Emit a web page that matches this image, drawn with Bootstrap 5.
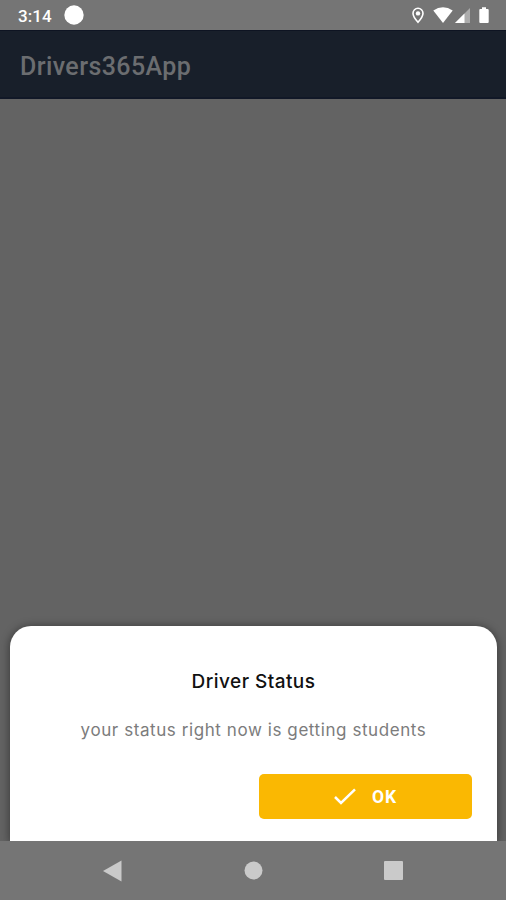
<!DOCTYPE html>
<html lang="en">
<head>
<meta charset="utf-8">
<meta name="viewport" content="width=device-width, initial-scale=1">
<title>Drivers365App</title>
<link href="https://cdn.jsdelivr.net/npm/bootstrap@5.3.0/dist/css/bootstrap.min.css" rel="stylesheet">
<style>
  body { font-family: Roboto, sans-serif; background: #636363; overflow: hidden; }
  .status-bar { height: 30px; background: #757575; padding: 0 16px 0 17px; }
  .clock { font-size: 17px; font-weight: 500; line-height: 30px; width: 47px; letter-spacing: .1px; padding: 1px 0 0 1px; }
  .app-bar { height: 69px; background: #181f2a; border-top: 1px solid #0e1422; border-bottom: 2px solid #111827; padding: 5px 20px 0; }
  .app-title { font-size: 25px; font-weight: 500; color: #6b6d70; letter-spacing: .4px; line-height: 36px; }
  .sheet { height: 215px; margin: 0 9px 0 10px; border-radius: 21px 21px 0 0; padding: 40px 25px 22px; box-shadow: 0 1px 9px 1px rgba(0,0,0,.4); }
  .sheet-title { font: 500 19px/30px Inter, sans-serif; color: #111; letter-spacing: .45px; padding-top: 1px; }
  .sheet-text { font: 400 17px/24px Inter, sans-serif; color: #7c7c7c; letter-spacing: .58px; margin-top: 21px; }
  .btn-ok { width: 213px; height: 45px; --bs-btn-bg: #fab802; --bs-btn-color: #fff; --bs-btn-border-width: 0; --bs-btn-border-radius: 5px; font-size: 17.5px; font-weight: 700; letter-spacing: 1px; padding-top: 7px; }
  .nav-keys { height: 59px; background: #757575; color: #cacaca; padding: 0 103px; }
</style>
<script src="https://cdn.jsdelivr.net/npm/bootstrap@5.3.0/dist/js/bootstrap.bundle.min.js"></script>
</head>
<body class="vh-100 d-flex flex-column">
  <div class="status-bar d-flex align-items-center text-white">
    <span class="clock">3:14</span>
    <svg width="20" height="20" viewBox="0 0 20 20" fill="currentColor"><circle cx="10" cy="10" r="9.7"/></svg>
    <svg class="ms-auto" width="80" height="20" viewBox="0 0 80 20" fill="currentColor">
      <path d="M8 3.300a5 5 0 0 0-5 5c0 3.500 5 9 5 9s5-5.500 5-9a5 5 0 0 0-5-5z" fill="none" stroke="currentColor" stroke-width="1.600"/>
      <circle cx="8" cy="8.400" r="2.200"/>
      <path d="M23.300 5.500Q28 2.200 33 2.200T42.700 5.500L33 18z"/>
      <path d="M60 3V18H45z" opacity=".4"/>
      <path d="M54.500 8.500V18H45z"/>
      <path d="M70.300 4H72V2.200h4V4h1.700q1 0 1 1v12q0 1-1 1h-7.400q-1 0-1-1V5q0-1 1-1z"/>
    </svg>
  </div>
  <header class="app-bar d-flex align-items-center">
    <h1 class="app-title mb-0">Drivers365App</h1>
  </header>
  <main class="flex-grow-1 d-flex flex-column justify-content-end overflow-hidden">
    <section class="sheet bg-white d-flex flex-column text-center">
      <h2 class="sheet-title mb-0">Driver Status</h2>
      <p class="sheet-text mb-0 text-nowrap">your status right now is getting students</p>
      <button type="button" class="btn btn-ok mt-auto ms-auto d-flex align-items-center justify-content-center">
        <svg class="me-3" width="22" height="18" viewBox="0 0 22 18" fill="none" stroke="currentColor" stroke-width="2.500"><path d="M1 9 7 15 21 1.300"/></svg>OK
      </button>
    </section>
  </main>
  <nav class="nav-keys d-flex align-items-center justify-content-between">
    <svg width="19" height="22" viewBox="0 0 19 22" fill="currentColor"><path d="M0 11 18.500 .500v21z"/></svg>
    <svg width="19" height="19" viewBox="0 0 19 19" fill="currentColor"><circle cx="9.500" cy="9.500" r="9"/></svg>
    <svg width="19" height="19" viewBox="0 0 19 19" fill="currentColor"><rect width="19" height="19" rx="1"/></svg>
  </nav>
</body>
</html>
